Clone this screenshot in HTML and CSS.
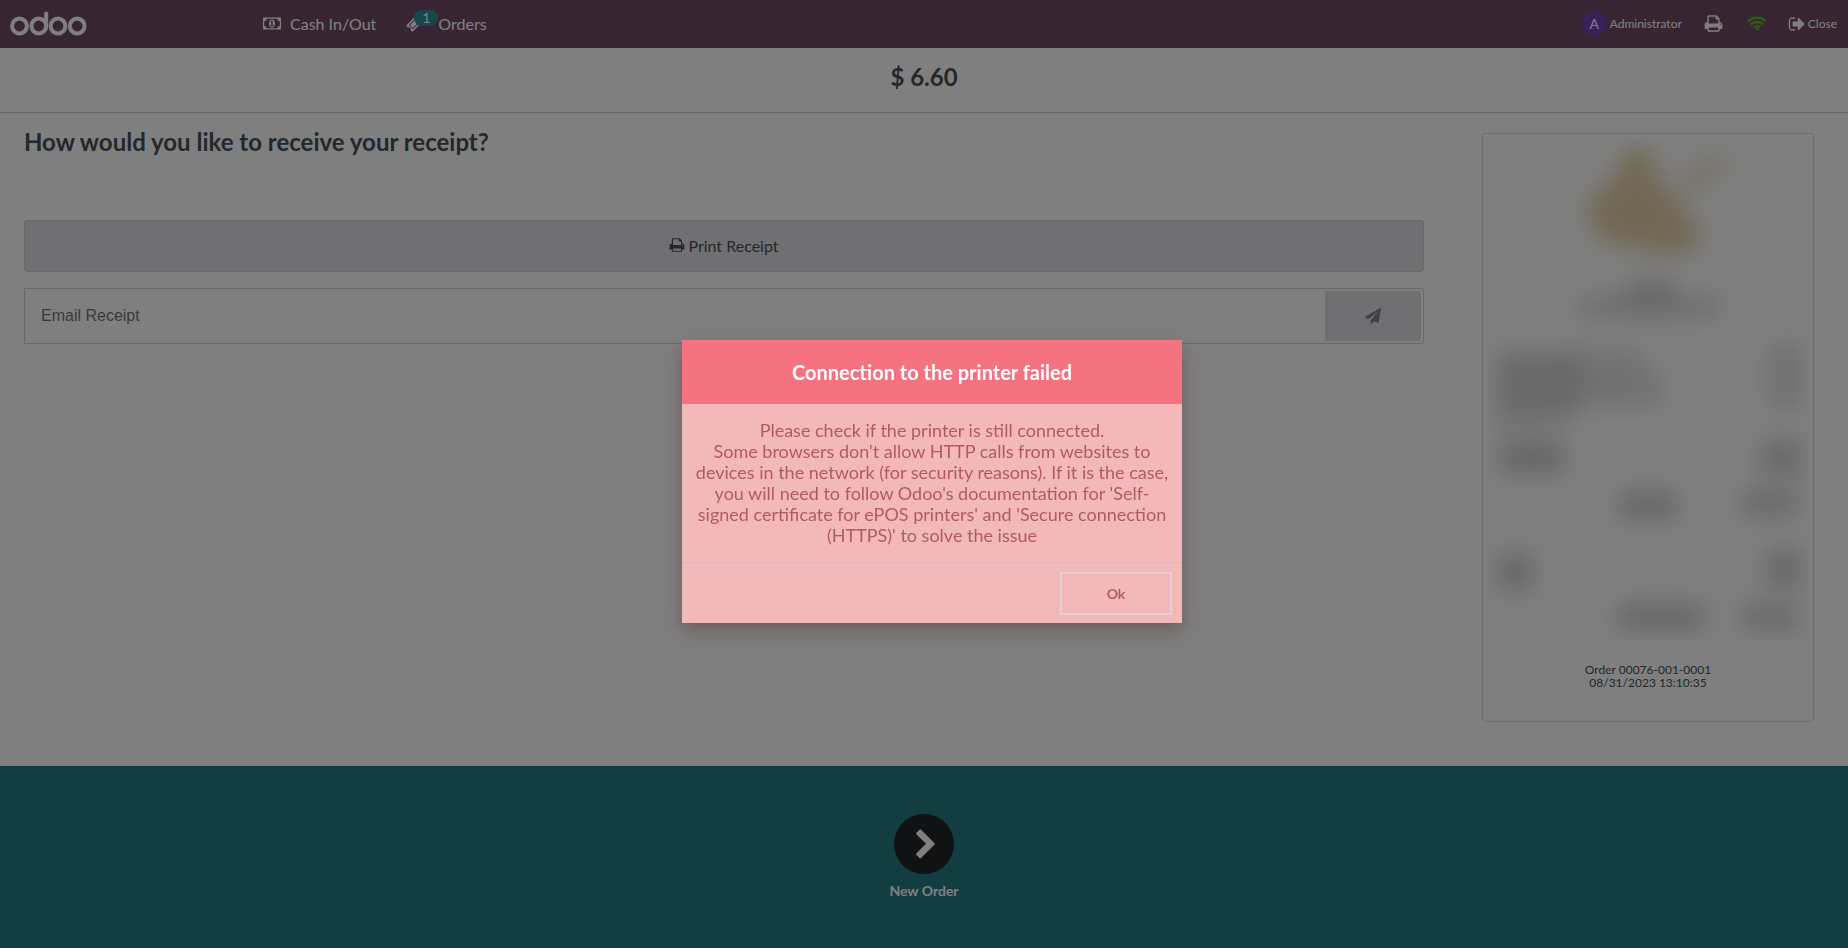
FILE: index.html
```html
<!DOCTYPE html>
<html lang="en">
<head>
<meta charset="utf-8">
<title>Point of Sale</title>
<link rel="stylesheet" href="styles.css">
</head>
<body>
<svg class="sprite" aria-hidden="true">
  <symbol id="print" viewBox="0 0 1792 1792"><path d="M448 1536h896v-256h-896v256zm0-640h896v-384h-160q-40 0-68-28t-28-68v-160h-640v640zm1152 64q0-26-19-45t-45-19-45 19-19 45 19 45 45 19 45-19 19-45zm128 0v416q0 13-9.500 22.500t-22.500 9.500h-224v160q0 40-28 68t-68 28h-960q-40 0-68-28t-28-68v-160h-224q-13 0-22.500-9.500t-9.500-22.500v-416q0-79 56.500-135.500t135.500-56.500h64v-544q0-40 28-68t68-28h672q40 0 88 20t76 48l152 152q28 28 48 76t20 88v256h64q79 0 135.500 56.500t56.500 135.500z"/></symbol>
</svg>

<div class="pos">
  <header class="topbar">
    <svg class="logo" viewBox="0 0 78 25" role="img" aria-label="odoo">
      <g fill="none" stroke="currentColor" stroke-width="4">
        <circle cx="9.500" cy="15" r="7.400"/><circle cx="28.800" cy="15" r="7.400"/>
        <circle cx="48" cy="15" r="7.400"/><circle cx="67.200" cy="15" r="7.400"/>
        <path d="M36.200 2.500V15" stroke-linecap="round"/>
      </g>
    </svg>
    <nav class="menu">
      <button class="menu-item cash">
        <svg class="icon-money" viewBox="0 0 1920 1792" aria-hidden="true"><path d="M768 1152h384v-96h-128v-448h-114l-148 137 77 80q42-37 55-57h2v288h-128v96zm512-256q0 70-21 142t-59.500 134-101.500 101-138 39-138-39-101.500-101-59.500-134-21-142 21-142 59.500-134 101.500-101 138-39 138 39 101.500 101 59.500 134 21 142zm512 256v-512q-106 0-181-75t-75-181h-1152q0 106-75 181t-181 75v512q106 0 181 75t75 181h1152q0-106 75-181t181-75zm128-832v1152q0 26-19 45t-45 19h-1792q-26 0-45-19t-19-45v-1152q0-26 19-45t45-19h1792q26 0 45 19t19 45z"/></svg>
        Cash In/Out
      </button>
      <button class="menu-item orders">
        <span class="ticket">
          <svg class="icon-ticket" viewBox="0 0 1792 1792" aria-hidden="true"><path d="M1024 452l316 316-572 572-316-316zm-211 979l618-618q19-19 19-45t-19-45l-362-362q-18-18-45-18t-45 18l-618 618q-19 19-19 45t19 45l362 362q18 18 45 18t45-18zm889-637l-907 908q-37 37-90.500 37t-90.500-37l-126-126q56-56 56-136t-56-136-136-56-136 56l-125-126q-37-37-37-90.500t37-90.500l907-906q37-37 90.500-37t90.500 37l125 125q-56 56-56 136t56 136 136 56 136-56l126 125q37 37 37 90.500t-37 90.500z"/></svg>
          <span class="badge">1</span>
        </span>
        Orders
      </button>
    </nav>
    <div class="status">
      <button class="user"><span class="avatar">A</span>Administrator</button>
      <button class="tool" aria-label="Printer"><svg class="icon-print" aria-hidden="true"><use href="#print"/></svg></button>
      <button class="tool wifi" aria-label="Connected">
        <svg class="icon-wifi" viewBox="0 0 20 15" aria-hidden="true"><g fill="none" stroke="currentColor" stroke-width="2.500"><path d="M1 5.500a12.600 12.600 0 0 1 18 0"/><path d="M3.900 8.600a8.600 8.600 0 0 1 12.200 0"/><path d="M6.800 11.500a4.600 4.600 0 0 1 6.400 0"/></g><path d="M7.900 12.800a3 3 0 0 1 4.200 0L10 14.900z" fill="currentColor"/></svg>
      </button>
      <button class="close">
        <svg class="icon-close" viewBox="0 0 1664 1792" aria-hidden="true"><path d="M704 1440q0 4 1 20t.5 26.500-3 23.500-10 19.500-20.500 6.500h-320q-119 0-203.500-84.500t-84.500-203.500v-704q0-119 84.500-203.500t203.500-84.500h320q13 0 22.500 9.500t9.500 22.500q0 4 1 20t.5 26.500-3 23.500-10 19.500-20.500 6.500h-320q-66 0-113 47t-47 113v704q0 66 47 113t113 47h312l11.500 1 11.500 3 8 5.500 7 9 2 13.500zm928-544q0 26-19 45l-544 544q-19 19-45 19t-45-19-19-45v-288h-448q-26 0-45-19t-19-45v-384q0-26 19-45t45-19h448v-288q0-26 19-45t45-19 45 19l544 544q19 19 19 45z"/></svg>
        Close
      </button>
    </div>
  </header>

  <div class="total">$ 6.60</div>

  <main class="content">
    <section class="actions">
      <h1 class="question">How would you like to receive your receipt?</h1>
      <button class="print"><svg class="icon-print" aria-hidden="true"><use href="#print"/></svg>Print Receipt</button>
      <form class="email">
        <input class="email-input" type="email" placeholder="Email Receipt" aria-label="Email Receipt">
        <button class="send" type="button" aria-label="Send"><svg class="icon-send" viewBox="0 0 1792 1792" aria-hidden="true"><path d="M1764 11q33 24 27 64l-256 1536q-5 29-32 45-14 8-31 8-11 0-24-5l-453-185-242 295q-18 23-49 23-13 0-22-4-19-7-30.500-23.500t-11.500-36.500v-349l864-1059-1069 925-395-162q-37-14-40-55-2-40 32-59l1664-960q15-9 32-9 20 0 36 11z"/></svg></button>
      </form>
    </section>
    <aside class="receipt">
      <svg class="receipt-art" viewBox="0 0 320 500" aria-hidden="true">
        <defs>
          <filter id="soft" x="-100%" y="-150%" width="300%" height="400%" color-interpolation-filters="sRGB"><feGaussianBlur stdDeviation="12"/></filter>
        </defs>
        <g fill="#dcc593">
          <path filter="url(#soft)" d="M144 6L166 12 168 42 190 56 196 76 216 88 206 112 172 114 112 100 96 66 120 44z" opacity=".8"/>
          <path filter="url(#soft)" d="M176 52L212 18 240 8 236 36 200 58z" opacity=".4"/>
        </g>
        <g fill="#50565a">
          <rect filter="url(#soft)" x="138" y="136" width="50" height="28" opacity=".2"/>
          <rect filter="url(#soft)" x="92" y="158" width="140" height="18" opacity=".26"/>
          <rect filter="url(#soft)" x="8" y="212" width="82" height="64" opacity=".26"/>
          <rect filter="url(#soft)" x="84" y="208" width="72" height="26" opacity=".15"/>
          <rect filter="url(#soft)" x="84" y="232" width="90" height="34" opacity=".17"/>
          <rect filter="url(#soft)" x="282" y="204" width="30" height="64" opacity=".2"/>
          <rect filter="url(#soft)" x="8" y="278" width="64" height="14" opacity=".16"/>
          <rect filter="url(#soft)" x="12" y="302" width="64" height="32" opacity=".3"/>
          <rect filter="url(#soft)" x="274" y="300" width="40" height="36" opacity=".28"/>
          <rect filter="url(#soft)" x="132" y="352" width="56" height="26" opacity=".32"/>
          <rect filter="url(#soft)" x="254" y="350" width="56" height="26" opacity=".28"/>
          <rect filter="url(#soft)" x="10" y="414" width="34" height="36" opacity=".3"/>
          <rect filter="url(#soft)" x="278" y="410" width="36" height="38" opacity=".28"/>
          <rect filter="url(#soft)" x="130" y="464" width="86" height="26" opacity=".3"/>
          <rect filter="url(#soft)" x="254" y="464" width="56" height="26" opacity=".28"/>
        </g>
      </svg>
      <p class="receipt-ref">Order 00076-001-0001<br>08/31/2023 13:10:35</p>
    </aside>
  </main>

  <footer class="next">
    <button class="new-order">
      <span class="circle"><svg class="icon-next" viewBox="0 0 1792 1792" aria-hidden="true"><path d="M1363 877l-742 742q-19 19-45 19t-45-19l-166-166q-19-19-19-45t19-45l531-531-531-531q-19-19-19-45t19-45l166-166q19-19 45-19t45 19l742 742q19 19 19 45t-19 45z"/></svg></span>
      New Order
    </button>
  </footer>
</div>

<div class="overlay">
  <div class="dialog" role="alertdialog" aria-labelledby="title" aria-describedby="message">
    <h2 class="dialog-title" id="title">Connection to the printer failed</h2>
    <p class="dialog-body" id="message">Please check if the printer is still connected.<br>Some browsers don't allow HTTP calls from websites to devices in the network (for security reasons). If it is the case, you will need to follow Odoo's documentation for 'Self-signed certificate for ePOS printers' and 'Secure connection (HTTPS)' to solve the issue</p>
    <div class="dialog-footer"><button class="ok">Ok</button></div>
  </div>
</div>
</body>
</html>
```
FILE: styles.css
```css
* { box-sizing: border-box; }

body {
  margin: 0;
  font-family: Lato, "Liberation Sans", sans-serif;
  font-size: 16px;
  color: #495057;
  background: #fff;
}

button {
  padding: 0;
  border: 0;
  background: none;
  font: inherit;
  color: inherit;
  cursor: pointer;
}

svg { display: block; fill: currentColor; flex: none; }
.sprite { position: absolute; width: 0; height: 0; }

.pos { display: flex; flex-direction: column; min-height: 100vh; }

/* Top bar */
.topbar {
  display: flex;
  align-items: center;
  height: 48px;
  padding: 0 11px 1px 10px;
  background: #714b67;
  color: #fff;
}
.logo { width: 78px; height: 25px; }
.menu { display: flex; align-items: center; gap: 30px; margin-left: 175px; }
.menu-item { display: flex; align-items: center; }
.cash { gap: 9px; }
.orders { gap: 16px; }
.icon-money { width: 18px; height: 17px; }
.icon-ticket { width: 16px; height: 16px; }
.ticket { position: relative; }
.badge {
  position: absolute;
  left: 8px;
  top: -6px;
  width: 24px;
  border-radius: 8px;
  background: #2b8f97;
  font-size: 14px;
  line-height: 16px;
}
.status { display: flex; align-items: center; margin-left: auto; font-size: 12px; }
.user { display: flex; align-items: center; gap: 3px; }
.avatar {
  width: 25px;
  border-radius: 50%;
  background: #7144b4;
  font-size: 14px;
  line-height: 25px;
}
.tool { margin-left: 22px; }
.tool .icon-print { width: 19px; height: 19px; }
.wifi { margin-left: 24px; color: #5db52a; }
.icon-wifi { width: 20px; height: 15px; }
.close { display: flex; align-items: center; gap: 3px; margin-left: 21px; }
.icon-close { width: 17px; height: 18px; }

/* Amount */
.total {
  padding: 14px 0 21px;
  border-bottom: 1px solid #c9ccd2;
  font-size: 24px;
  font-weight: 700;
  line-height: 29px;
  text-align: center;
}

/* Receipt options */
.content {
  display: flex;
  flex: 1;
  align-items: flex-start;
  gap: 58px;
  padding: 0 34px 44px 24px;
}
.actions { flex: 1; }
.question {
  margin: 14px 0 63px;
  font-size: 24px;
  font-weight: 700;
  line-height: 30px;
}
.print {
  display: flex;
  align-items: center;
  justify-content: center;
  gap: 3px;
  width: 100%;
  height: 52px;
  padding-bottom: 2px;
  border: 1px solid #d0d0d2;
  border-radius: 3px;
  background: #e0e0e4;
}
.print .icon-print { width: 16px; height: 16px; }
.email {
  display: flex;
  height: 56px;
  margin-top: 16px;
  padding: 2px;
  border: 1px solid #cfcfd1;
  border-radius: 0 3px 3px 0;
}
.email-input {
  flex: 1;
  min-width: 0;
  padding: 0 14px;
  border: 0;
  background: none;
  font: 16px "Liberation Sans", sans-serif;
}
.email-input::placeholder { color: #757575; }
.send {
  display: grid;
  place-items: center;
  width: 96px;
  background: #e0e0e4;
  color: #7c828c;
}
.icon-send { width: 16px; height: 16px; }

.receipt {
  width: 332px;
  margin-top: 20px;
  padding: 6px 5px 32px;
  border: 1px solid #dcdcdc;
  border-radius: 3px;
}
.receipt-art { width: 100%; height: auto; }
.receipt-ref {
  margin: 23px 0 0;
  font-size: 12px;
  line-height: 13px;
  text-align: center;
}

/* Next order */
.next {
  display: flex;
  justify-content: center;
  padding: 48px 0 47px;
  background: #257c82;
  color: #fff;
}
.new-order {
  display: flex;
  flex-direction: column;
  align-items: center;
  gap: 7px;
  font-size: 14px;
  font-weight: 700;
  line-height: 20px;
}
.circle {
  display: grid;
  place-items: center;
  width: 60px;
  height: 60px;
  padding: 2px 0 0 4px;
  border-radius: 50%;
  background: #212529;
}
.icon-next { width: 32px; height: 32px; }

/* Error dialog */
.overlay {
  position: fixed;
  inset: 0;
  display: grid;
  place-items: center;
  padding: 14px 0 0 16px;
  background: rgba(0, 0, 0, .5);
}
.dialog {
  width: 500px;
  background: #f3b9ba;
  color: #b15b5d;
  text-align: center;
  box-shadow: 0 8px 20px rgba(80, 40, 40, .4);
}
.dialog-title {
  margin: 0;
  background: #f57381;
  color: #fff;
  font-size: 20px;
  line-height: 64px;
}
.dialog-body {
  margin: 0;
  padding: 16px 12px;
  border-bottom: 1px solid #e9b3b5;
  font-size: 18px;
  line-height: 21px;
}
.dialog-footer { display: flex; justify-content: flex-end; padding: 9px 10px 8px; }
.ok {
  width: 112px;
  height: 43px;
  border: 2px solid #e8cfd3;
  font-size: 14px;
  font-weight: 700;
}
```
